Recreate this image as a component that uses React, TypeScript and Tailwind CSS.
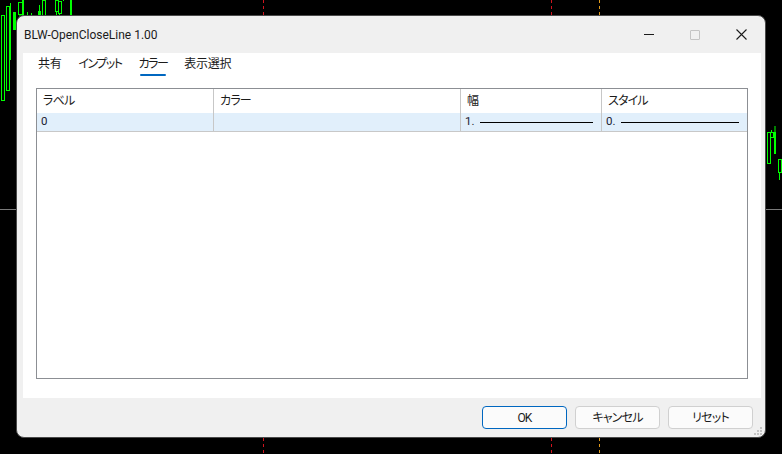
import React from "react";

type Candle = { x: number; w: number; top: number; bottom: number; wickTop?: number; wickBottom?: number; hollow?: boolean };

const candles: Candle[] = [
  { x: 1, w: 3, top: 15, bottom: 100, hollow: true },
  { x: 6, w: 3, top: 6, bottom: 90, hollow: true },
  { x: 10, w: 1, top: 3, bottom: 60 },
  { x: 13, w: 3, top: 12, bottom: 30 },
  { x: 18, w: 4, top: 2, bottom: 14, hollow: true, wickBottom: 18 },
  { x: 22, w: 2, top: 0, bottom: 20 },
  { x: 27, w: 1, top: 12, bottom: 15 },
  { x: 31, w: 1, top: 13, bottom: 15 },
  { x: 38, w: 3, top: 11, bottom: 15, wickTop: 5 },
  { x: 42, w: 3, top: 0, bottom: 15, hollow: true },
  { x: 55, w: 3, top: 0, bottom: 11, hollow: true, wickBottom: 15 },
  { x: 58, w: 3, top: 1, bottom: 13, hollow: true, wickBottom: 16 },
  { x: 63, w: 1, top: 0, bottom: 1 },
  { x: 70, w: 2, top: 0, bottom: 15 },
  { x: 767, w: 3, top: 132, bottom: 163, hollow: true },
  { x: 770, w: 3, top: 132, bottom: 137, hollow: true, wickTop: 130 },
  { x: 774, w: 2, top: 132, bottom: 154, wickTop: 126 },
  { x: 778, w: 3, top: 159, bottom: 172, hollow: true, wickBottom: 180 },
];

function Chart() {
  return (
    <svg className="absolute inset-0" width={782} height={454} viewBox="0 0 782 454">
      <line x1={0} y1={209.5} x2={782} y2={209.5} stroke="#7a7a7a" strokeWidth={1} />
      <line x1={263.5} y1={0} x2={263.5} y2={454} stroke="#d0141e" strokeDasharray="3 3" />
      <line x1={551.5} y1={0} x2={551.5} y2={454} stroke="#d0141e" strokeDasharray="3 3" />
      <line x1={599.5} y1={0} x2={599.5} y2={454} stroke="#e09a1c" strokeDasharray="3 3" />
      {candles.map((c, i) => {
        const cx = c.x + c.w / 2;
        return (
          <g key={i} stroke="#00ff00" strokeWidth={1}>
            {c.wickTop !== undefined ? <line x1={cx} y1={c.wickTop} x2={cx} y2={c.top} /> : null}
            {c.wickBottom !== undefined ? <line x1={cx} y1={c.bottom} x2={cx} y2={c.wickBottom} /> : null}
            {c.hollow ? (
              <rect x={c.x + 0.5} y={c.top + 0.5} width={c.w} height={c.bottom - c.top} fill="none" />
            ) : (
              <rect x={c.x} y={c.top} width={c.w} height={c.bottom - c.top} fill="#00ff00" stroke="none" />
            )}
          </g>
        );
      })}
    </svg>
  );
}

// proportional kana, closer to Yu Gothic UI widths
const jp = "font-['Roboto','Noto_Sans_CJK_JP',sans-serif] [font-feature-settings:'palt']";

const columns = [
  { label: "ラベル", width: "w-[176px]" },
  { label: "カラー", width: "w-[247px]" },
  { label: "幅", width: "w-[141px]" },
  { label: "スタイル", width: "flex-1" },
];

const tabs = [
  { label: "共有", kana: false },
  { label: "インプット", kana: true },
  { label: "カラー", kana: true, active: true },
  { label: "表示選択", kana: false },
];

function Tabs() {
  return (
    <div className="flex h-[24px] items-start gap-[17px] pl-[15px] pt-[2px]">
      {tabs.map((t) => (
        <div key={t.label} className="flex flex-col items-center">
          <span className={`text-[12px] leading-[18px] text-[#1b1b1b] ${t.kana ? "tracking-[-1.5px]" : "tracking-[-0.3px]"}`}>{t.label}</span>
          {t.active ? <span className="mt-[1px] h-[2px] w-[26px] rounded-full bg-[#0067c0]" /> : null}
        </div>
      ))}
    </div>
  );
}

function LineSample({ value }: { value: string }) {
  return (
    <div className="flex h-full items-center pl-[4px] pr-[8px]">
      <span className="text-[11.5px] text-[#1a1a30]">{value}</span>
      <span className="ml-[5px] h-px flex-1 bg-black" />
    </div>
  );
}

function ColorTable() {
  return (
    <div className="mx-[13px] mt-[11px] mb-[19px] flex-1 border border-[#8c8f94] bg-white">
      <div className="flex h-[24px]">
        {columns.map((c, i) => (
          <div
            key={c.label}
            className={`${c.width} flex items-center pl-[6px] text-[12px] tracking-[-0.8px] text-[#1b1b1b] ${i > 0 ? "border-l border-[#c7c7c7]" : ""}`}
          >
            {c.label}
          </div>
        ))}
      </div>
      <div className="flex h-[19px] border-b border-[#c8c8c8] bg-[#e1effb]">
        <div className="flex w-[176px] items-center pl-[4px] text-[11.5px] text-[#1a1a30]">0</div>
        <div className="w-[247px] border-l border-[#c7c7c7]" />
        <div className="w-[141px] border-l border-[#c7c7c7]">
          <LineSample value="1." />
        </div>
        <div className="flex-1 border-l border-[#c7c7c7]">
          <LineSample value="0." />
        </div>
      </div>
    </div>
  );
}

function WindowButtons() {
  return (
    <div className="flex h-full items-center">
      <div className="flex h-full w-[46px] items-center justify-center">
        <span className="h-px w-[10px] bg-[#1b1b1b]" />
      </div>
      <div className="flex h-full w-[46px] items-center justify-center">
        <span className="h-[10px] w-[10px] rounded-[1px] border border-[#c4c4c4]" />
      </div>
      <div className="flex h-full w-[46px] items-center justify-center">
        <svg width={11} height={11} viewBox="0 0 11 11">
          <path d="M0.5 0.5 L10.5 10.5 M10.5 0.5 L0.5 10.5" stroke="#1b1b1b" strokeWidth={1.1} />
        </svg>
      </div>
    </div>
  );
}

function FooterButton({ label, primary }: { label: string; primary?: boolean }) {
  return (
    <button
      type="button"
      className={`h-[23px] w-[85px] rounded-[4px] bg-[#fbfbfb] text-[12px] tracking-[-0.8px] text-[#1b1b1b] ${
        primary ? "border border-[#0067c0]" : "border border-[#d0d0d0]"
      }`}
    >
      {label}
    </button>
  );
}

export default function App() {
  return (
    <div className={`relative h-[454px] w-[782px] overflow-hidden bg-black ${jp}`}>
      <Chart />
      <div className="absolute left-[16px] top-[15px] flex h-[423px] w-[750px] flex-col overflow-hidden rounded-[8px] border border-[#4a4a4a] bg-[#f0f0f0]">
        <div className="flex h-[37px] shrink-0 items-center justify-between">
          <span className="pl-[7px] text-[12px] text-[#1b1b1b]">BLW-OpenCloseLine 1.00</span>
          <div className="h-full pr-[1px]">
            <WindowButtons />
          </div>
        </div>
        <div className="ml-[6px] mr-[4px] flex flex-1 flex-col bg-white">
          <Tabs />
          <ColorTable />
        </div>
        <div className="relative flex h-[39px] shrink-0 items-center justify-end gap-[8px] pr-[12px]">
          <FooterButton label="OK" primary />
          <FooterButton label="キャンセル" />
          <FooterButton label="リセット" />
          <svg className="absolute bottom-[1px] right-[2px]" width={10} height={10} viewBox="0 0 10 10">
            {[
              [7, 1],
              [4, 4],
              [7, 4],
              [1, 7],
              [4, 7],
              [7, 7],
            ].map(([x, y], i) => (
              <rect key={i} x={x} y={y} width={2} height={2} fill="#c4c4c4" />
            ))}
          </svg>
        </div>
      </div>
    </div>
  );
}
